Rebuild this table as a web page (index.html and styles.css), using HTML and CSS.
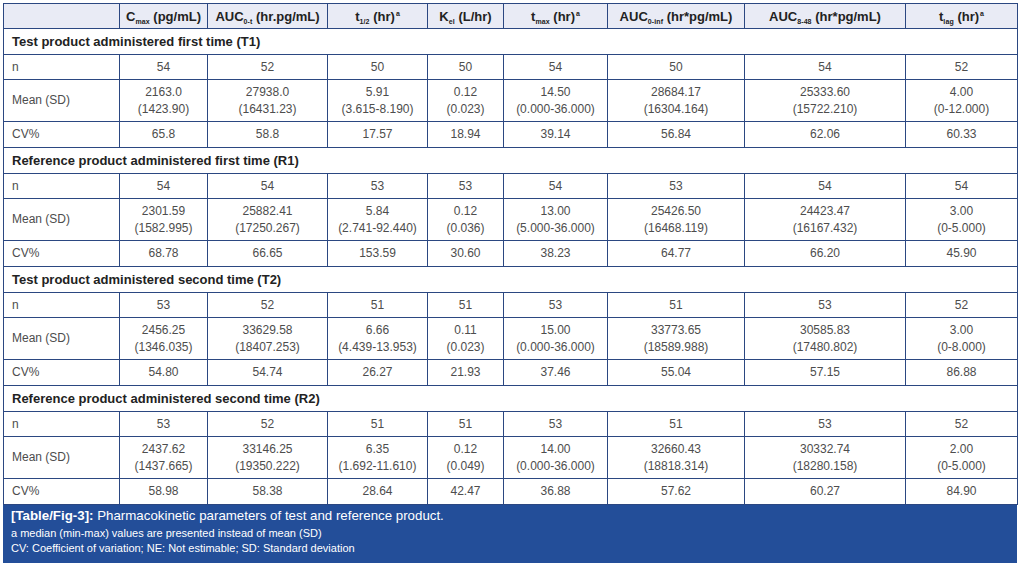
FILE: index.html
```html
<!DOCTYPE html>
<html>
<head>
<meta charset="utf-8">
<link rel="stylesheet" href="styles.css">
</head>
<body>
<div class="wrap">
<table class="pk">
  <colgroup>
    <col class="c0"><col class="c1"><col class="c2"><col class="c3"><col class="c4"><col class="c5"><col class="c6"><col class="c7"><col class="c8">
  </colgroup>
  <thead>
    <tr class="head">
      <th></th>
      <th>C<sub>max</sub> (pg/mL)</th>
      <th>AUC<sub>0-t</sub> (hr.pg/mL)</th>
      <th>t<sub>1/2</sub> (hr)<sup>a</sup></th>
      <th>K<sub>el</sub> (L/hr)</th>
      <th>t<sub>max</sub> (hr)<sup>a</sup></th>
      <th>AUC<sub>0-inf</sub> (hr*pg/mL)</th>
      <th>AUC<sub>8-48</sub> (hr*pg/mL)</th>
      <th>t<sub>lag</sub> (hr)<sup>a</sup></th>
    </tr>
  </thead>
  <tbody>
    <tr class="sec"><td colspan="9">Test product administered first time (T1)</td></tr>
    <tr class="rn"><td>n</td><td>54</td><td>52</td><td>50</td><td>50</td><td>54</td><td>50</td><td>54</td><td>52</td></tr>
    <tr class="rm"><td>Mean (SD)</td><td>2163.0<br>(1423.90)</td><td>27938.0<br>(16431.23)</td><td>5.91<br>(3.615-8.190)</td><td>0.12<br>(0.023)</td><td>14.50<br>(0.000-36.000)</td><td>28684.17<br>(16304.164)</td><td>25333.60<br>(15722.210)</td><td>4.00<br>(0-12.000)</td></tr>
    <tr class="rc"><td>CV%</td><td>65.8</td><td>58.8</td><td>17.57</td><td>18.94</td><td>39.14</td><td>56.84</td><td>62.06</td><td>60.33</td></tr>

    <tr class="sec"><td colspan="9">Reference product administered first time (R1)</td></tr>
    <tr class="rn"><td>n</td><td>54</td><td>54</td><td>53</td><td>53</td><td>54</td><td>53</td><td>54</td><td>54</td></tr>
    <tr class="rm"><td>Mean (SD)</td><td>2301.59<br>(1582.995)</td><td>25882.41<br>(17250.267)</td><td>5.84<br>(2.741-92.440)</td><td>0.12<br>(0.036)</td><td>13.00<br>(5.000-36.000)</td><td>25426.50<br>(16468.119)</td><td>24423.47<br>(16167.432)</td><td>3.00<br>(0-5.000)</td></tr>
    <tr class="rc"><td>CV%</td><td>68.78</td><td>66.65</td><td>153.59</td><td>30.60</td><td>38.23</td><td>64.77</td><td>66.20</td><td>45.90</td></tr>

    <tr class="sec"><td colspan="9">Test product administered second time (T2)</td></tr>
    <tr class="rn"><td>n</td><td>53</td><td>52</td><td>51</td><td>51</td><td>53</td><td>51</td><td>53</td><td>52</td></tr>
    <tr class="rm"><td>Mean (SD)</td><td>2456.25<br>(1346.035)</td><td>33629.58<br>(18407.253)</td><td>6.66<br>(4.439-13.953)</td><td>0.11<br>(0.023)</td><td>15.00<br>(0.000-36.000)</td><td>33773.65<br>(18589.988)</td><td>30585.83<br>(17480.802)</td><td>3.00<br>(0-8.000)</td></tr>
    <tr class="rc"><td>CV%</td><td>54.80</td><td>54.74</td><td>26.27</td><td>21.93</td><td>37.46</td><td>55.04</td><td>57.15</td><td>86.88</td></tr>

    <tr class="sec"><td colspan="9">Reference product administered second time (R2)</td></tr>
    <tr class="rn"><td>n</td><td>53</td><td>52</td><td>51</td><td>51</td><td>53</td><td>51</td><td>53</td><td>52</td></tr>
    <tr class="rm"><td>Mean (SD)</td><td>2437.62<br>(1437.665)</td><td>33146.25<br>(19350.222)</td><td>6.35<br>(1.692-11.610)</td><td>0.12<br>(0.049)</td><td>14.00<br>(0.000-36.000)</td><td>32660.43<br>(18818.314)</td><td>30332.74<br>(18280.158)</td><td>2.00<br>(0-5.000)</td></tr>
    <tr class="rc"><td>CV%</td><td>58.98</td><td>58.38</td><td>28.64</td><td>42.47</td><td>36.88</td><td>57.62</td><td>60.27</td><td>84.90</td></tr>
  </tbody>
</table>
<div class="caption">
  <p class="cap-title"><b>[Table/Fig-3]:</b> Pharmacokinetic parameters of test and reference product.</p>
  <p class="cap-note">a median (min-max) values are presented instead of mean (SD)</p>
  <p class="cap-note">CV: Coefficient of variation; NE: Not estimable; SD: Standard deviation</p>
</div>
</div>
</body>
</html>
```

FILE: styles.css
```css
html, body {
  margin: 0;
  padding: 0;
  background: #ffffff;
}

body {
  font-family: "Liberation Sans", Arial, Helvetica, sans-serif;
}

.wrap {
  width: 1014px;
  margin: 3px 0 0 3px;
}

.pk {
  width: 1014px;
  border-collapse: collapse;
  table-layout: fixed;
}

.c0 { width: 116px; }
.c1 { width: 88px; }
.c2 { width: 120px; }
.c3 { width: 100px; }
.c4 { width: 76px; }
.c5 { width: 104px; }
.c6 { width: 137px; }
.c7 { width: 161px; }
.c8 { width: 112px; }

.pk th,
.pk td {
  border: 1px solid #2b4781;
  padding: 0 4px;
  text-align: center;
  vertical-align: middle;
  white-space: nowrap;
}

.head th {
  height: 24px;
  background: #e9ebf5;
  color: #222;
  font-size: 13px;
  font-weight: bold;
  line-height: 15px;
}

.head sub {
  font-size: 7px;
  vertical-align: -3px;
  line-height: 0;
  letter-spacing: 0.1px;
}

.head sup {
  font-size: 7px;
  vertical-align: 5px;
  line-height: 0;
  padding-left: 1px;
}

.sec td {
  height: 25px;
  text-align: left;
  padding-left: 8px;
  font-size: 13px;
  font-weight: bold;
  color: #222;
}

.pk tbody td {
  font-size: 12px;
  color: #4d4d4d;
  line-height: 17px;
}

.pk tbody .sec td {
  font-size: 13px;
  color: #222;
}

.pk tbody td:first-child {
  text-align: left;
  padding-left: 8px;
}

.rn td { height: 24px; }
.rm td { height: 41px; }
.rc td { height: 25px; }

.caption {
  background: #234e99;
  color: #ffffff;
  width: 1014px;
  padding: 1px 8px 16px 8px;
  box-sizing: border-box;
}

.caption p {
  margin: 0;
}

.cap-title {
  font-size: 13.3px;
  line-height: 20px;
}

.cap-note {
  font-size: 11px;
  line-height: 14.5px;
}
```
